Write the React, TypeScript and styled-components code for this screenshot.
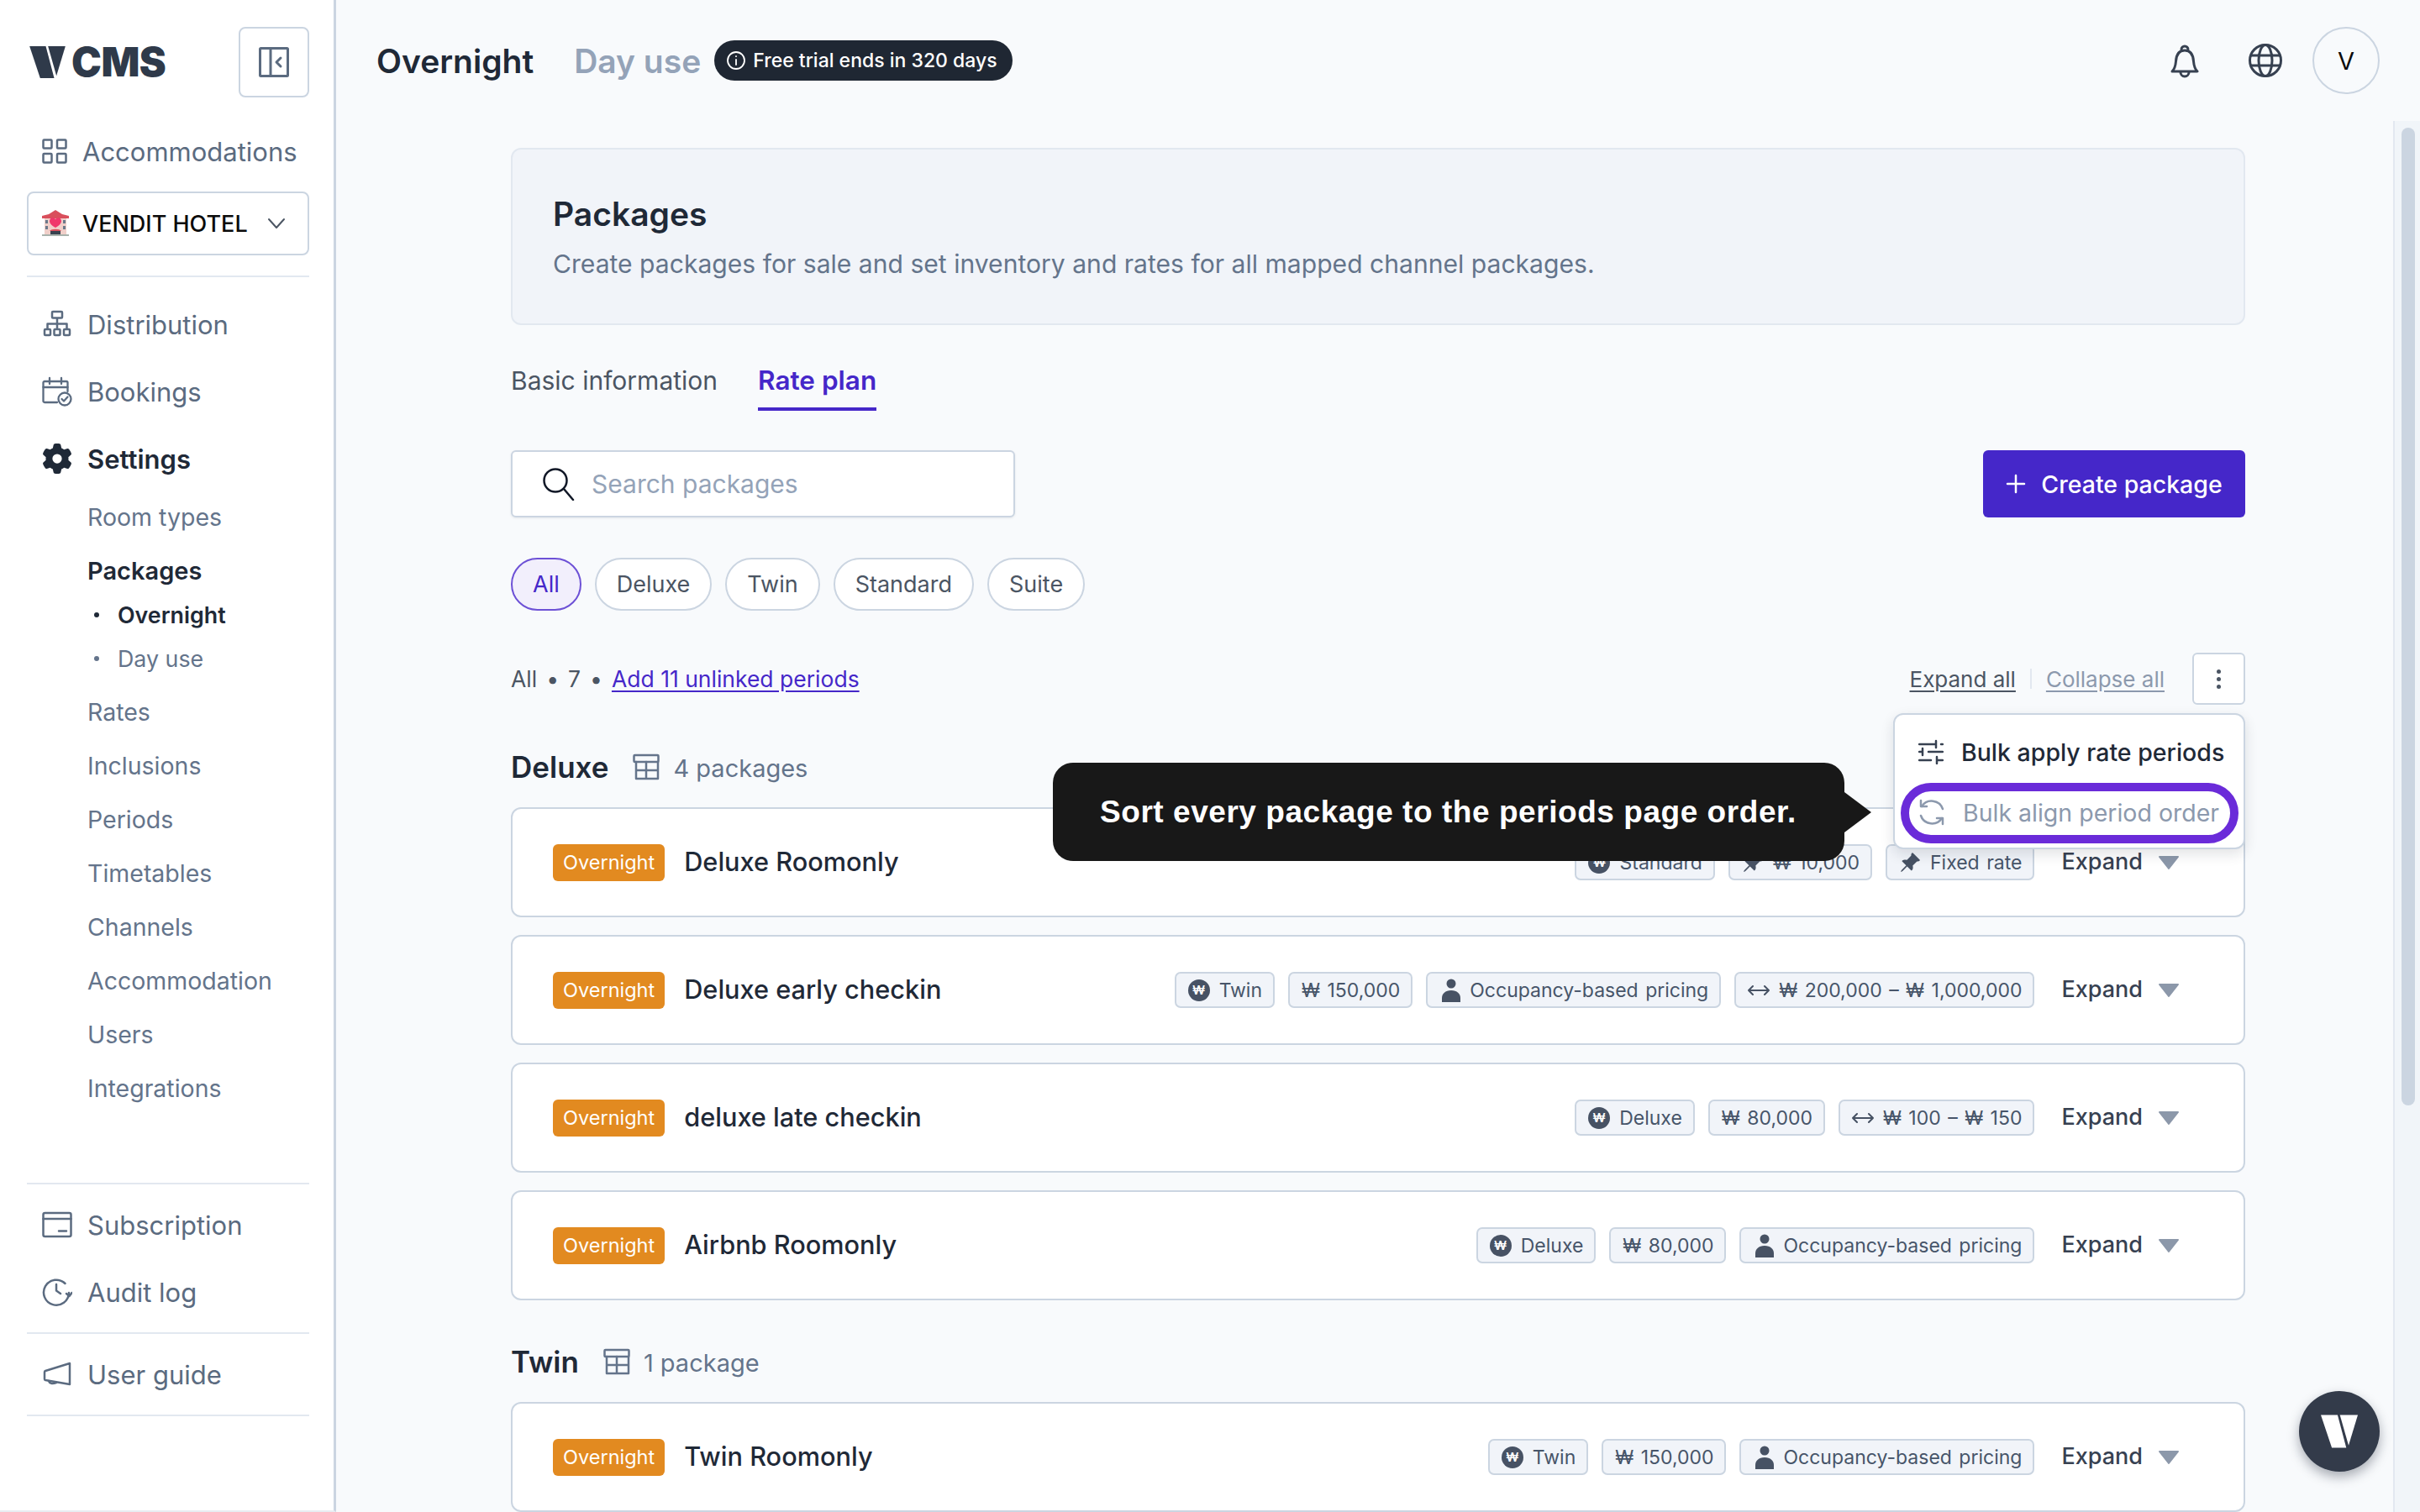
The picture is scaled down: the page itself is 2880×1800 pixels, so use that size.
import * as React from 'react';
import styled, { createGlobalStyle } from 'styled-components';
import { BsPinAngleFill } from 'react-icons/bs';
import { FaGear } from 'react-icons/fa6';

const Global = createGlobalStyle`
  html, body {
    margin: 0;
    width: 2880px;
    height: 1800px;
    overflow: hidden;
    background: #f8fafc;
    font-family: Inter, "Noto Sans", sans-serif;
  }
  * { box-sizing: border-box; }
`;

const Shell = styled.div`
  position: relative;
  display: flex;
  width: 2880px;
  height: 1800px;
  overflow: hidden;
`;

/* sidebar */
const Sidebar = styled.aside`
  width: 400px;
  flex: none;
  padding: 32px 29px 0 32px;
  background: #fff;
  border-right: 3px solid #cbd5e1;
  border-bottom: 2px solid #e8edf2;
  display: flex;
  flex-direction: column;
`;
const Brand = styled.div`
  display: flex;
  align-items: center;
  justify-content: space-between;
  height: 84px;
`;
const Logo = styled.div`
  display: flex;
  align-items: center;
  gap: 7px;
  margin-left: 3px;
`;
const LogoWord = styled.span`
  font-size: 48px;
  line-height: 1;
  font-weight: 900;
  color: #2f3a4a;
  letter-spacing: -0.5px;
`;
const SquareButton = styled.button`
  width: 84px;
  height: 84px;
  padding: 0;
  display: flex;
  align-items: center;
  justify-content: center;
  background: #fff;
  border: 2px solid #cbd5e1;
  border-radius: 8px;
`;
const AccRow = styled.div`
  height: 64px;
  margin-top: 32px;
  padding-left: 18px;
  display: flex;
  align-items: center;
  gap: 18px;
  font-size: 31px;
  color: #5b6b80;
`;
const HotelSelect = styled.div`
  height: 76px;
  margin-top: 16px;
  padding: 0 26px 0 16px;
  display: flex;
  align-items: center;
  gap: 16px;
  background: #fff;
  border: 2px solid #cbd5e1;
  border-radius: 8px;
  font-size: 27px;
  font-weight: 500;
  color: #0b0b0b;
  span { flex: 1; white-space: nowrap; }
  svg { flex: none; }
`;
const Rule = styled.div<{ $top: number }>`
  height: 2px;
  margin-top: ${p => p.$top}px;
  background: #e2e8f0;
  flex: none;
`;
const NavRow = styled.div<{ $active?: boolean }>`
  height: 80px;
  padding-left: 18px;
  display: flex;
  align-items: center;
  gap: 18px;
  font-size: 31px;
  font-weight: ${p => (p.$active ? 600 : 400)};
  color: ${p => (p.$active ? '#1f2937' : '#5b6b80')};
  svg { width: 36px; height: 36px; flex: none; }
`;
const SubList = styled.div`
  margin-top: -3px;
  padding-left: 72px;
`;
const SubItem = styled.div<{ $active?: boolean }>`
  height: 64px;
  display: flex;
  align-items: center;
  font-size: ${p => (p.$active ? 29 : 28.5)}px;
  font-weight: ${p => (p.$active ? 600 : 400)};
  color: ${p => (p.$active ? '#1f2937' : '#64748b')};
`;
const SubSub = styled.div`
  margin: -5px 0 5px;
`;
const Leaf = styled.div<{ $active?: boolean }>`
  height: 52px;
  display: flex;
  align-items: center;
  font-size: 26.8px;
  font-weight: ${p => (p.$active ? 600 : 400)};
  color: ${p => (p.$active ? '#1f2937' : '#64748b')};
  &::before {
    content: '';
    width: 6px;
    height: 6px;
    margin: 0 22px 0 8px;
    border-radius: 50%;
    background: currentColor;
  }
`;
const BottomNav = styled.div`
  margin-top: 81px;
`;
const NavGroup = styled.div<{ $top: number }>`
  margin-top: ${p => p.$top}px;
`;

/* main */
const Main = styled.main`
  flex: 1;
  min-width: 0;
  display: flex;
  flex-direction: column;
`;
const Header = styled.header`
  height: 144px;
  flex: none;
  padding: 0 48px;
  display: flex;
  align-items: center;
`;
const HeadTab = styled.div<{ $muted?: boolean }>`
  font-size: 39px;
  font-weight: 600;
  color: ${p => (p.$muted ? '#94a3b8' : '#1f2937')};
  margin-right: ${p => (p.$muted ? 16 : 48)}px;
`;
const TrialPill = styled.div`
  height: 48px;
  padding: 0 18px 0 14px;
  display: flex;
  align-items: center;
  gap: 8px;
  border-radius: 24px;
  background: #1f2733;
  color: #fff;
  font-size: 23px;
  font-weight: 500;
  white-space: nowrap;
`;
const HeaderRight = styled.div`
  margin-left: auto;
  display: flex;
  align-items: center;
`;
const HeaderIcon = styled.div<{ $gap: number }>`
  width: 48px;
  height: 48px;
  margin-right: ${p => p.$gap}px;
  display: flex;
  align-items: center;
  justify-content: center;
`;
const Avatar = styled.div`
  width: 80px;
  height: 80px;
  border: 2px solid #cbd5e1;
  border-radius: 50%;
  display: flex;
  align-items: center;
  justify-content: center;
  font-size: 29px;
  color: #0b0b0b;
`;
const Body = styled.div`
  flex: 1;
  min-height: 0;
  display: flex;
`;
const Content = styled.div`
  flex: 1;
  min-width: 0;
  padding: 32px 176px 0 208px;
  overflow: hidden;
`;
const Scrollbar = styled.div`
  width: 32px;
  flex: none;
  padding: 8px;
  background: #f1f5f9;
  border-left: 2px solid #e2e8f0;
`;
const Thumb = styled.div`
  width: 16px;
  height: 1164px;
  border-radius: 8px;
  background: #cbd5e1;
`;
const InfoBox = styled.section`
  height: 211px;
  padding: 0 48px;
  display: flex;
  flex-direction: column;
  justify-content: center;
  background: #f1f4f9;
  border: 2px solid #e2e8f0;
  border-radius: 12px;
  h1 {
    margin: 2px 0 15px;
    font-size: 39px;
    line-height: 48px;
    font-weight: 600;
    color: #1f2937;
  }
  p {
    margin: 0;
    font-size: 30.1px;
    line-height: 40px;
    color: #64748b;
  }
`;
const Tabs = styled.div`
  margin-top: 47px;
  display: flex;
  gap: 48px;
`;
const Tab = styled.div<{ $active?: boolean }>`
  height: 55px;
  line-height: 38px;
  font-size: ${p => (p.$active ? 31.5 : 30)}px;
  font-weight: ${p => (p.$active ? 600 : 400)};
  color: ${p => (p.$active ? '#4527c9' : '#4b5563')};
  border-bottom: 4px solid ${p => (p.$active ? '#4527c9' : 'transparent')};
`;
const Toolbar = styled.div`
  margin-top: 47px;
  display: flex;
  justify-content: space-between;
`;
const SearchBox = styled.label`
  width: 600px;
  height: 80px;
  padding-left: 35px;
  display: flex;
  align-items: center;
  gap: 19px;
  background: #fff;
  border: 2px solid #cbd5e1;
  border-radius: 6px;
  box-shadow: 0 1px 3px rgba(15, 23, 42, 0.08);
  input {
    flex: 1;
    min-width: 0;
    border: 0;
    outline: 0;
    padding: 0;
    background: transparent;
    font: 400 30px Inter, sans-serif;
  }
  input::placeholder { color: #94a3b8; opacity: 1; }
`;
const CreateButton = styled.button`
  width: 312px;
  height: 80px;
  padding: 0;
  display: flex;
  align-items: center;
  justify-content: center;
  gap: 18px;
  border: 0;
  border-radius: 6px;
  background: #4527c9;
  color: #fff;
  font: 500 28.5px Inter, sans-serif;
`;
const Filters = styled.div`
  margin-top: 48px;
  display: flex;
  gap: 16px;
`;
const Filter = styled.div<{ $active?: boolean }>`
  height: 63px;
  padding: 0 24px;
  display: flex;
  align-items: center;
  border-radius: 32px;
  border: 2px solid ${p => (p.$active ? '#6d51d6' : '#cbd5e1')};
  background: ${p => (p.$active ? '#f2effc' : '#fff')};
  color: ${p => (p.$active ? '#4527c9' : '#4b5563')};
  font-size: 27px;
`;
const ListBar = styled.div`
  position: relative;
  height: 62px;
  margin-top: 50px;
  display: flex;
  align-items: center;
  justify-content: space-between;
  font-size: 26.5px;
  color: #4b5563;
`;
const ListCount = styled.div`
  display: flex;
  align-items: center;
  gap: 11px;
  a { color: #4527c9; text-decoration: underline; text-underline-offset: 4px; }
`;
const ListActions = styled.div`
  display: flex;
  align-items: center;
  font-size: 26px;
`;
const TextLink = styled.a<{ $muted?: boolean }>`
  color: ${p => (p.$muted ? '#8c99ad' : '#4b5563')};
  text-decoration: underline;
  text-underline-offset: 4px;
`;
const Sep = styled.i`
  width: 2px;
  height: 24px;
  margin: 0 17px;
  background: #e2e8f0;
`;
const Kebab = styled.button`
  width: 63px;
  height: 62px;
  margin-left: 33px;
  padding: 0;
  display: flex;
  flex-direction: column;
  align-items: center;
  justify-content: center;
  gap: 4px;
  background: #fff;
  border: 2px solid #cbd5e1;
  border-radius: 6px;
  i { width: 5px; height: 5px; border-radius: 50%; background: #4b5563; }
`;
const Menu = styled.div`
  position: absolute;
  z-index: 3;
  top: 72px;
  right: 0;
  width: 419px;
  height: 162px;
  padding-top: 8px;
  background: #fff;
  border: 2px solid #cbd5e1;
  border-radius: 12px;
  box-shadow: 0 6px 16px rgba(15, 23, 42, 0.12);
`;
const MenuItem = styled.div<{ $mark?: boolean }>`
  position: relative;
  height: 72px;
  margin-left: -2px;
  padding-left: 30px;
  display: flex;
  align-items: center;
  gap: 21px;
  font-size: 28.5px;
  font-weight: ${p => (p.$mark ? 400 : 500)};
  color: ${p => (p.$mark ? '#8c99ad' : '#1f2937')};
  white-space: nowrap;
  ${p =>
    p.$mark &&
    `&::after {
      content: '';
      position: absolute;
      inset: 1px 6px -1px 9px;
      border: 10px solid #6a2bd9;
      border-radius: 37px;
    }`}
`;
const Tooltip = styled.div`
  position: absolute;
  z-index: 4;
  top: 131px;
  left: 645px;
  width: 942px;
  height: 117px;
  padding-left: 56px;
  display: flex;
  align-items: center;
  background: #181818;
  border-radius: 24px;
  color: #fff;
  font: 700 37px "Liberation Sans", Arial, sans-serif;
  letter-spacing: 0.55px;
  white-space: nowrap;
  &::after {
    content: '';
    position: absolute;
    top: 35px;
    left: 100%;
    border-style: solid;
    border-width: 24px 0 24px 32px;
    border-color: transparent transparent transparent #181818;
  }
`;
const SectionHead = styled.div<{ $top: number }>`
  height: 48px;
  margin-top: ${p => p.$top}px;
  display: flex;
  align-items: center;
  h2 {
    margin: 0 29px 0 0;
    font-size: 35px;
    font-weight: 600;
    color: #1f2937;
  }
  span {
    margin: 2px 0 0 16px;
    font-size: 29px;
    color: #64748b;
  }
`;
const CardStack = styled.div`
  margin-top: 24px;
  display: flex;
  flex-direction: column;
  gap: 21px;
`;
const Card = styled.div`
  height: 131px;
  flex: none;
  padding: 0 76px 0 48px;
  display: flex;
  align-items: center;
  background: #fff;
  border: 2px solid #cbd5e1;
  border-radius: 12px;
`;
const Badge = styled.div`
  height: 44px;
  padding: 0 12px;
  display: flex;
  align-items: center;
  border-radius: 6px;
  background: #e28a20;
  color: #fff;
  font-size: 23.5px;
`;
const CardTitle = styled.div`
  margin-left: 23px;
  padding-bottom: 2px;
  font-size: 30.7px;
  font-weight: 500;
  color: #1f2937;
`;
const TagRow = styled.div`
  margin-left: auto;
  display: flex;
  gap: 16px;
`;
const Tag = styled.div`
  height: 43px;
  padding: 0 13px 0 14px;
  display: flex;
  align-items: center;
  gap: 11px;
  background: #f1f4f9;
  border: 2px solid #cbd5e1;
  border-radius: 7px;
  font-size: 23px;
  word-spacing: 2px;
  color: #475569;
  white-space: nowrap;
`;
const WonDot = styled.span`
  width: 26px;
  height: 26px;
  border-radius: 50%;
  background: #475264;
  color: #fff;
  font-size: 15px;
  font-weight: 600;
  display: flex;
  align-items: center;
  justify-content: center;
`;
const ExpandText = styled.div`
  margin-left: 32px;
  padding-bottom: 2px;
  font-size: 27px;
  font-weight: 500;
  color: #374151;
`;
const Caret = styled.svg`
  width: 26px;
  height: 18px;
  margin-left: 18px;
  flex: none;
`;
const Fab = styled.div`
  position: absolute;
  left: 2736px;
  top: 1656px;
  width: 96px;
  height: 96px;
  border-radius: 50%;
  display: flex;
  align-items: center;
  justify-content: center;
  background: #333b4a;
  box-shadow: 0 6px 14px rgba(15, 23, 42, 0.35);
`;

const Stroke = ({ w, h, color = '#5b6b80', sw = 2.5, children }: any) => (
  <svg width={w} height={h} viewBox={`0 0 ${w} ${h}`} fill="none" stroke={color} strokeWidth={sw} strokeLinecap="round" strokeLinejoin="round">
    {children}
  </svg>
);

const VMark = ({ color, w, h }: { color: string; w: number; h: number }) => (
  <svg width={w} height={h} viewBox="0 0 128 114" fill={color}>
    <polygon points="0,0 58,0 88,114 38,114" />
    <polygon points="66,0 128,0 96,106" />
  </svg>
);

const CollapseIcon = () => (
  <Stroke w={36} h={36} sw={3}>
    <rect x="1.5" y="1.5" width="33" height="33" rx="1" />
    <path d="M14 1.5v33M26 13l-5 5 5 5" />
  </Stroke>
);
const GridIcon = () => (
  <Stroke w={30} h={30}>
    <rect x="1.5" y="1.5" width="10" height="10" rx="1" />
    <rect x="18" y="1.5" width="10.5" height="10" rx="1" />
    <rect x="1.5" y="18" width="10" height="10.5" rx="1" />
    <rect x="18" y="18" width="10.5" height="10.5" rx="1" />
  </Stroke>
);
const HotelIcon = () => (
  <svg width="32" height="32" viewBox="0 0 32 32">
    <rect x="3" y="6" width="26" height="25" fill="#f0cfc9" />
    <path d="M0 7l8-2 8-5 8 5 8 2v3H0z" fill="#d94f5c" />
    <path d="M16 21c-5-3-7-5-7-8 0-4 5-5 7-2 2-3 7-2 7 2 0 3-2 5-7 8z" fill="#f0386b" />
    <rect x="4" y="12" width="3" height="4" fill="#6b7a8c" />
    <rect x="25" y="12" width="3" height="4" fill="#6b7a8c" />
    <rect x="4" y="19" width="3" height="4" fill="#6b7a8c" />
    <rect x="25" y="19" width="3" height="4" fill="#6b7a8c" />
    <rect x="10" y="25" width="12" height="6" fill="#37424f" />
    <path d="M9 25c2-3 12-3 14 0z" fill="#d94f5c" />
    <rect x="0" y="29" width="32" height="2" fill="#a9b3ad" />
  </svg>
);
const DistIcon = () => (
  <svg viewBox="0 0 36 36" fill="none" stroke="#5b6b80" strokeWidth="2.5" strokeLinejoin="round">
    <rect x="12" y="3" width="12" height="7.5" rx="1" />
    <rect x="3" y="24" width="7" height="7" rx="1" />
    <rect x="14.5" y="24" width="7" height="7" rx="1" />
    <rect x="26" y="24" width="7" height="7" rx="1" />
    <path d="M18 10.5V24M6.5 24v-6.5h23V24" />
  </svg>
);
const BookIcon = () => (
  <svg viewBox="0 0 36 36" fill="none" stroke="#5b6b80" strokeWidth="2.3" strokeLinecap="round" strokeLinejoin="round">
    <path d="M18 31H3a1.5 1.5 0 0 1-1.5-1.5v-22A1.5 1.5 0 0 1 3 6h26a1.5 1.5 0 0 1 1.5 1.5V18" />
    <path d="M1.5 13h29M9 2v7M23 2v7" />
    <circle cx="27" cy="27" r="7.5" fill="#fff" />
    <path d="M23.5 27l2.5 2.5 4.5-5" />
  </svg>
);
const CardIcon = () => (
  <svg viewBox="0 0 36 36" fill="none" stroke="#5b6b80" strokeWidth="2.5" strokeLinecap="round" strokeLinejoin="round">
    <rect x="1.5" y="4" width="33" height="28" rx="2" />
    <path d="M1.5 11h33M20 25.5h9" />
  </svg>
);
const AuditIcon = () => (
  <svg viewBox="0 0 36 36" fill="none" stroke="#5b6b80" strokeWidth="2.5" strokeLinecap="round" strokeLinejoin="round">
    <path d="M32 19a15 15 0 1 1-4.5-11" />
    <path d="M17 9v7.5l5 3.5M29 20l3.5 3 3-4" />
  </svg>
);
const GuideIcon = () => (
  <svg viewBox="0 0 36 36" fill="none" stroke="#5b6b80" strokeWidth="2.5" strokeLinecap="round" strokeLinejoin="round">
    <path d="M33 5v25L4 25a1.5 1.5 0 0 1-1-1.5v-8A1.5 1.5 0 0 1 4 14L33 5z" />
    <path d="M8 26c1 3 4 4 9 2" />
  </svg>
);
const SectionIcon = () => (
  <Stroke w={32} h={32} color="#64748b">
    <rect x="1.5" y="2" width="29" height="8" rx="1" />
    <path d="M4 10v20h26V10M4 20h26M16 10v20" />
  </Stroke>
);
const PersonIcon = () => (
  <svg width="22" height="28" viewBox="0 0 22 28" fill="#475264" style={{ marginLeft: 3 }}>
    <circle cx="11" cy="6" r="5.5" />
    <path d="M0 28v-5c0-5 4-9 11-9s11 4 11 9v5z" />
  </svg>
);
const RangeIcon = () => (
  <Stroke w={26} h={16} color="#475264" sw={2}>
    <path d="M1 8h24M6 3L1 8l5 5M20 3l5 5-5 5" />
  </Stroke>
);
const SlidersIcon = ({ color }: { color: string }) => (
  <Stroke w={30} h={30} color={color} sw={2.5}>
    <path d="M1 6h20M27 6h2M1 15h4M12 15h17M1 25h14M22 25h7M21 2v8M5 11v8M22 21v8" />
  </Stroke>
);
const SyncIcon = () => (
  <Stroke w={32} h={32} color="#8c99ad" sw={2.5}>
    <path d="M4 9A14 14 0 0 1 29 12M28 23A14 14 0 0 1 3 20" />
    <path d="M3 2v7h7M29 30v-7h-7" />
  </Stroke>
);

const won = <WonDot>₩</WonDot>;
const pkgs = [
  {
    title: 'Deluxe Roomonly',
    tags: [[won, 'Standard'], [<BsPinAngleFill key="p" size={26} color="#475264" />, '₩ 10,000'], [<BsPinAngleFill key="f" size={26} color="#475264" />, 'Fixed rate']],
  },
  {
    title: 'Deluxe early checkin',
    tags: [[won, 'Twin'], [null, '₩ 150,000'], [<PersonIcon key="o" />, 'Occupancy-based pricing'], [<RangeIcon key="r" />, '₩ 200,000 – ₩ 1,000,000']],
  },
  {
    title: 'deluxe late checkin',
    tags: [[won, 'Deluxe'], [null, '₩ 80,000'], [<RangeIcon key="r" />, '₩ 100 – ₩ 150']],
  },
  {
    title: 'Airbnb Roomonly',
    tags: [[won, 'Deluxe'], [null, '₩ 80,000'], [<PersonIcon key="o" />, 'Occupancy-based pricing']],
  },
];
const twin = {
  title: 'Twin Roomonly',
  tags: [[won, 'Twin'], [null, '₩ 150,000'], [<PersonIcon key="o" />, 'Occupancy-based pricing']],
};

const PackageCard = ({ pkg }: any) => (
  <Card>
    <Badge>Overnight</Badge>
    <CardTitle>{pkg.title}</CardTitle>
    <TagRow>
      {pkg.tags.map(([icon, label]: any) => (
        <Tag key={label}>
          {icon}
          {label}
        </Tag>
      ))}
    </TagRow>
    <ExpandText>Expand</ExpandText>
    <Caret viewBox="0 0 26 18">
      <path d="M2 2h22L13 16z" fill="#8c98aa" stroke="#8c98aa" strokeWidth="2" strokeLinejoin="round" />
    </Caret>
  </Card>
);

const subItems = ['Rates', 'Inclusions', 'Periods', 'Timetables', 'Channels', 'Accommodation', 'Users', 'Integrations'];

export default function App() {
  return (
    <Shell>
      <Global />
      <Sidebar>
        <Brand>
          <Logo>
            <VMark color="#2f3a4a" w={43} h={38} />
            <LogoWord>CMS</LogoWord>
          </Logo>
          <SquareButton>
            <CollapseIcon />
          </SquareButton>
        </Brand>
        <AccRow>
          <GridIcon />
          Accommodations
        </AccRow>
        <HotelSelect>
          <HotelIcon />
          <span>VENDIT HOTEL</span>
          <Stroke w={22} h={14} color="#4b5563" sw={2}>
            <path d="M2 2l9 10 9-10" />
          </Stroke>
        </HotelSelect>
        <Rule $top={24} />
        <NavGroup $top={16}>
          <NavRow><DistIcon />Distribution</NavRow>
          <NavRow><BookIcon />Bookings</NavRow>
          <NavRow $active><FaGear color="#1f2937" />Settings</NavRow>
        </NavGroup>
        <SubList>
          <SubItem>Room types</SubItem>
          <SubItem $active>Packages</SubItem>
          <SubSub>
            <Leaf $active>Overnight</Leaf>
            <Leaf>Day use</Leaf>
          </SubSub>
          {subItems.map(s => (
            <SubItem key={s}>{s}</SubItem>
          ))}
        </SubList>
        <BottomNav>
          <Rule $top={0} />
          <NavGroup $top={8}>
            <NavRow><CardIcon />Subscription</NavRow>
            <NavRow><AuditIcon />Audit log</NavRow>
          </NavGroup>
          <Rule $top={8} />
          <NavGroup $top={8}>
            <NavRow><GuideIcon />User guide</NavRow>
          </NavGroup>
          <Rule $top={8} />
        </BottomNav>
      </Sidebar>
      <Main>
        <Header>
          <HeadTab>Overnight</HeadTab>
          <HeadTab $muted>Day use</HeadTab>
          <TrialPill>
            <Stroke w={24} h={24} color="#fff" sw={1.8}>
              <circle cx="12" cy="12" r="10" />
              <path d="M12 11v6M12 7v.2" />
            </Stroke>
            Free trial ends in 320 days
          </TrialPill>
          <HeaderRight>
            <HeaderIcon $gap={48}>
              <Stroke w={34} h={42} color="#374151" sw={3}>
                <path d="M2 34c3-3 4-6 4.5-12C7 14 10 9 17 9s10 5 10.5 13c.5 6 1.5 9 4.5 12z" />
                <path d="M13 8a4 4 0 1 1 8 0M12 35a5 5 0 0 0 10 0" />
              </Stroke>
            </HeaderIcon>
            <HeaderIcon $gap={32}>
              <Stroke w={42} h={42} color="#374151" sw={3}>
                <circle cx="21" cy="21" r="18.5" />
                <ellipse cx="21" cy="21" rx="8" ry="18.5" />
                <path d="M4 15h34M4 27h34" />
              </Stroke>
            </HeaderIcon>
            <Avatar>V</Avatar>
          </HeaderRight>
        </Header>
        <Body>
          <Content>
            <InfoBox>
              <h1>Packages</h1>
              <p>Create packages for sale and set inventory and rates for all mapped channel packages.</p>
            </InfoBox>
            <Tabs>
              <Tab>Basic information</Tab>
              <Tab $active>Rate plan</Tab>
            </Tabs>
            <Toolbar>
              <SearchBox>
                <Stroke w={40} h={40} color="#111827" sw={2.5}>
                  <circle cx="16" cy="16" r="13.5" />
                  <path d="M26 26l11 13" />
                </Stroke>
                <input placeholder="Search packages" readOnly />
              </SearchBox>
              <CreateButton>
                <Stroke w={24} h={24} color="#fff" sw={2.5}>
                  <path d="M12 2v20M2 12h20" />
                </Stroke>
                Create package
              </CreateButton>
            </Toolbar>
            <Filters>
              <Filter $active>All</Filter>
              <Filter>Deluxe</Filter>
              <Filter>Twin</Filter>
              <Filter>Standard</Filter>
              <Filter>Suite</Filter>
            </Filters>
            <ListBar>
              <ListCount>
                All<span>•</span>7<span>•</span>
                <a>Add 11 unlinked periods</a>
              </ListCount>
              <ListActions>
                <TextLink>Expand all</TextLink>
                <Sep />
                <TextLink $muted>Collapse all</TextLink>
                <Kebab>
                  <i />
                  <i />
                  <i />
                </Kebab>
              </ListActions>
              <Menu>
                <MenuItem>
                  <SlidersIcon color="#374151" />
                  Bulk apply rate periods
                </MenuItem>
                <MenuItem $mark>
                  <SyncIcon />
                  Bulk align period order
                </MenuItem>
              </Menu>
              <Tooltip>Sort every package to the periods page order.</Tooltip>
            </ListBar>
            <SectionHead $top={50}>
              <h2>Deluxe</h2>
              <SectionIcon />
              <span>4 packages</span>
            </SectionHead>
            <CardStack>
              {pkgs.map(p => (
                <PackageCard key={p.title} pkg={p} />
              ))}
            </CardStack>
            <SectionHead $top={49}>
              <h2>Twin</h2>
              <SectionIcon />
              <span>1 package</span>
            </SectionHead>
            <CardStack>
              <PackageCard pkg={twin} />
            </CardStack>
          </Content>
          <Scrollbar>
            <Thumb />
          </Scrollbar>
        </Body>
      </Main>
      <Fab>
        <VMark color="#fff" w={44} h={40} />
      </Fab>
    </Shell>
  );
}
